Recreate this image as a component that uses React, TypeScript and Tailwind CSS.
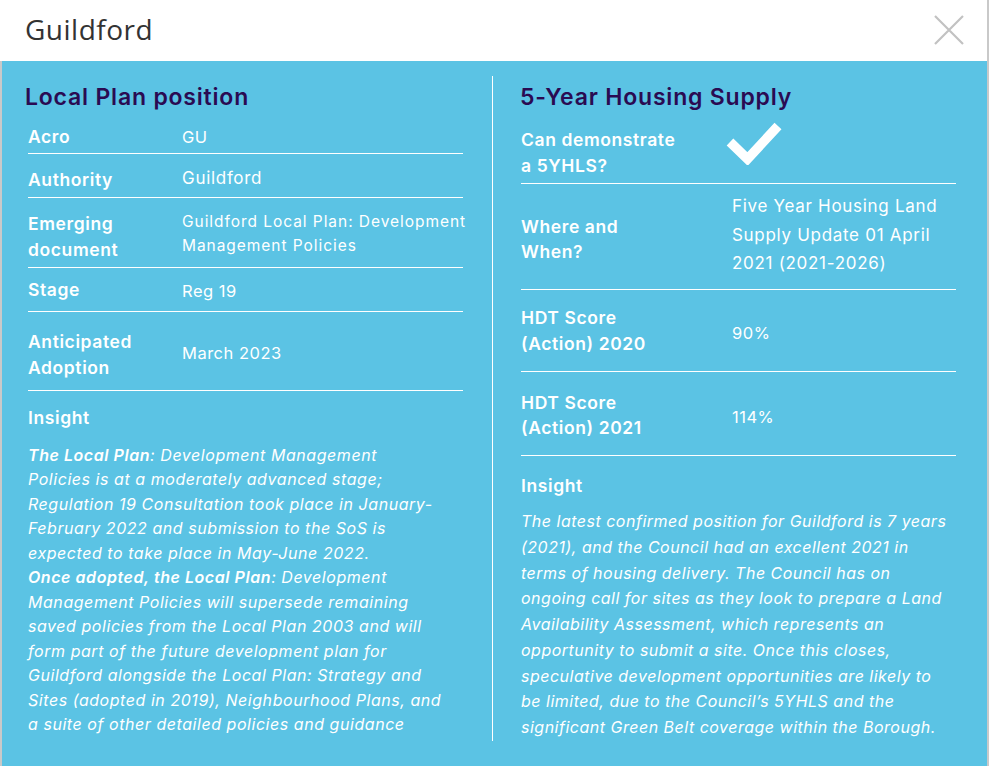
import React from 'react';

const font = { fontFamily: 'Inter, "Noto Sans", sans-serif' };

function Row({ h, label, value, labelPad = '', valuePad = '', valueClass = 'text-[16.5px] tracking-[0.5px]' }: {
  h: string;
  label: React.ReactNode;
  value: React.ReactNode;
  labelPad?: string;
  valuePad?: string;
  valueClass?: string;
}) {
  return (
    <div className={`flex items-center border-b border-white ${h}`}>
      <div className={`w-[154px] shrink-0 text-[17.5px] font-semibold leading-[26px] tracking-[0.6px] text-white ${labelPad}`}>{label}</div>
      <div className={`leading-[24px] text-white ${valuePad} ${valueClass}`}>{value}</div>
    </div>
  );
}

function RowR({ h, label, value, labelPad = '', valuePad = '' }: {
  h: string;
  label: React.ReactNode;
  value: React.ReactNode;
  labelPad?: string;
  valuePad?: string;
}) {
  return (
    <div className={`flex items-center border-b border-white ${h}`}>
      <div className={`w-[211px] shrink-0 text-[17.5px] font-semibold leading-[25.5px] tracking-[0.6px] text-white ${labelPad}`}>{label}</div>
      <div className={`text-[16.5px] leading-[28.5px] tracking-[0.5px] text-white ${valuePad}`}>{value}</div>
    </div>
  );
}

export default function App() {
  return (
    <div className="h-[766px] w-[989px] overflow-hidden bg-white" style={font}>
      {/* header */}
      <div className="flex h-[61px] items-center justify-between border-r-2 border-[#c9c9c9] bg-white pl-[25px] pr-[22px]">
        <h2 className="-mt-[4px] text-[28px] tracking-[0.5px] text-[#333]" style={{ fontFamily: '"Open Sans", sans-serif' }}>Guildford</h2>
        <svg width="32" height="32" viewBox="0 0 32 32" className="-mt-[2px]">
          <path d="M2 2 L30 30 M30 2 L2 30" stroke="#c2c2c2" strokeWidth="2.2" fill="none" />
        </svg>
      </div>

      {/* body */}
      <div className="flex h-[705px] border-x-2 border-[#c9c9c9] bg-[#5bc3e4] pt-[15px]">
        {/* left column */}
        <div className="ml-[26px] w-[435px] shrink-0 pt-[6px]">
          <h3 className="-ml-[3px] h-[30px] text-[23px] font-semibold leading-[30px] tracking-[0.8px] text-[#2a0b52]">Local Plan position</h3>
          <Row h="h-[42px]" labelPad="pt-[9px]" valuePad="pt-[9px]" label="Acro" value="GU" />
          <Row h="h-[44px]" labelPad="pt-[9px]" valuePad="pt-[5px]" valueClass="text-[17px] tracking-[0.7px]" label="Authority" value="Guildford" />
          <Row
            h="h-[70px]"
            labelPad="pt-[8px]"
            valuePad="pt-[2px]"
            valueClass="text-[15.5px] tracking-[0.95px] whitespace-nowrap"
            label={<>Emerging<br />document</>}
            value={<>Guildford Local Plan: Development<br />Management Policies</>}
          />
          <Row h="h-[44px]" label="Stage" value="Reg 19" valuePad="pt-[2px]" />
          <Row
            h="h-[79px]"
            labelPad="pt-[7px]"
            valuePad="pt-[4px]"
            label={<>Anticipated<br />Adoption</>}
            value="March 2023"
          />
          <div className="mt-[14px] text-[17.5px] font-semibold leading-[26px] tracking-[0.6px] text-white">Insight</div>
          <p className="mt-[12px] whitespace-nowrap text-[16px] italic leading-[24.45px] tracking-[0.55px] text-white">
            <span className="font-semibold">The Local Plan</span>: Development Management<br />
            Policies is at a moderately advanced stage;<br />
            Regulation 19 Consultation took place in January-<br />
            February 2022 and submission to the SoS is<br />
            expected to take place in May-June 2022.<br />
            <span className="font-semibold">Once adopted, the Local Plan</span>: Development<br />
            Management Policies will supersede remaining<br />
            saved policies from the Local Plan 2003 and will<br />
            form part of the future development plan for<br />
            Guildford alongside the Local Plan: Strategy and<br />
            Sites (adopted in 2019), Neighbourhood Plans, and<br />
            a suite of other detailed policies and guidance
          </p>
        </div>

        {/* divider */}
        <div className="ml-[29px] h-[665px] w-px shrink-0 bg-white" />

        {/* right column */}
        <div className="ml-[28px] w-[435px] shrink-0 pt-[6px]">
          <h3 className="-ml-[1px] h-[30px] text-[23px] font-semibold leading-[30px] tracking-[0.8px] text-[#2a0b52]">5-Year Housing Supply</h3>
          <div className="flex h-[72px] items-center border-b border-white">
            <div className="w-[211px] shrink-0 pt-[10px] text-[17.5px] font-semibold leading-[25.5px] tracking-[0.6px] text-white">
              Can demonstrate<br />a 5YHLS?
            </div>
            <svg width="56" height="44" viewBox="0 0 56 44" className="-mt-[9px] ml-[-6px]">
              <path d="M4 21 L21.5 38 L52 5" stroke="white" strokeWidth="9.5" fill="none" strokeLinejoin="miter" />
            </svg>
          </div>
          <RowR
            h="h-[106px]"
            labelPad="pt-[5px]"
            valuePad="pb-[3px]"
            label={<>Where and<br />When?</>}
            value={<span className="whitespace-nowrap text-[17px] tracking-[0.7px]">Five Year Housing Land<br />Supply Update 01 April<br />2021 (2021-2026)</span>}
          />
          <RowR h="h-[82px]" valuePad="pt-[5px]" label={<>HDT Score<br />(Action) 2020</>} value="90%" />
          <RowR h="h-[84px]" labelPad="pt-[3px]" valuePad="pt-[7px]" label={<>HDT Score<br />(Action) 2021</>} value="114%" />
          <div className="mt-[17px] text-[17.5px] font-semibold leading-[26px] tracking-[0.6px] text-white">Insight</div>
          <p className="mt-[10px] whitespace-nowrap text-[16px] italic leading-[25.75px] tracking-[0.5px] text-white">
            The latest confirmed position for Guildford is 7 years<br />
            (2021), and the Council had an excellent 2021 in<br />
            terms of housing delivery. The Council has on<br />
            ongoing call for sites as they look to prepare a Land<br />
            Availability Assessment, which represents an<br />
            opportunity to submit a site. Once this closes,<br />
            speculative development opportunities are likely to<br />
            be limited, due to the Council’s 5YHLS and the<br />
            significant Green Belt coverage within the Borough.
          </p>
        </div>
      </div>
    </div>
  );
}
